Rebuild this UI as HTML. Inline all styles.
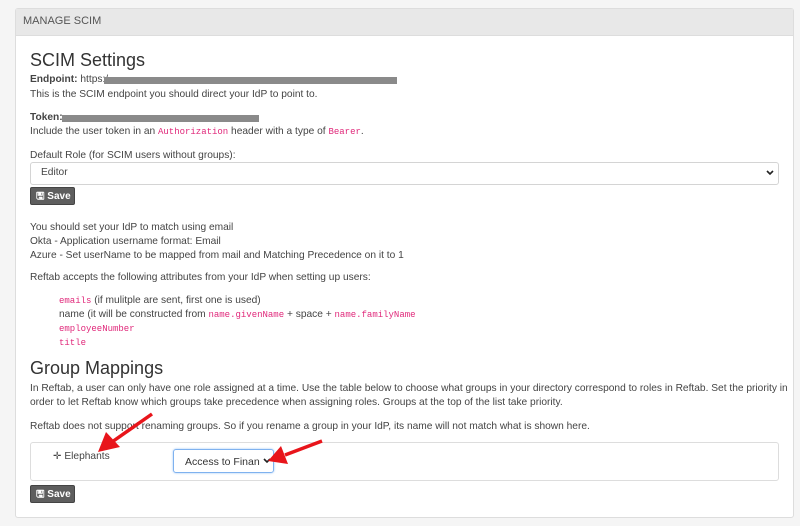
<!DOCTYPE html>
<html><head><style>
body{margin:0;width:800px;height:526px;background:#f5f5f5;font-family:"Liberation Sans",sans-serif;color:#444;position:relative;overflow:hidden}
.a{position:absolute;font-size:10.2px;white-space:nowrap;line-height:12px}
.c{font-family:"Liberation Mono",monospace;color:#e0287a;font-size:9px}
.panel{position:absolute;left:15px;top:8px;width:777px;height:508px;background:#fff;border:1px solid #ddd;border-radius:3px}
.hd{position:absolute;left:0;top:0;right:0;height:26px;background:#e8e8e8;border-bottom:1px solid #ddd}
.btn{position:absolute;left:30px;width:45px;height:18px;background:#5e5e5e;border:1px solid #444;border-radius:2px;color:#fff;font-size:10px;line-height:17px;font-weight:bold;box-sizing:border-box;padding-left:5px}
.red{position:absolute;height:7px;background:#8a8a8a}
h2{position:absolute;margin:0;font-weight:normal;font-size:18px;color:#333;left:30px}
</style></head><body>
<div class="panel"><div class="hd"></div></div>
<div class="a" style="left:23px;top:15px;font-size:11px;color:#555">MANAGE SCIM</div>
<h2 style="top:50px">SCIM Settings</h2>
<div class="a" style="left:30px;top:74px"><b>Endpoint:</b> https:/</div>
<div class="red" style="left:104px;top:77px;width:293px"></div>
<div class="a" style="left:30px;top:89px">This is the SCIM endpoint you should direct your IdP to point to.</div>
<div class="a" style="left:30px;top:112px"><b>Token:</b></div>
<div class="red" style="left:62px;top:115px;width:197px"></div>
<div class="a" style="left:30px;top:126px">Include the user token in an <span class="c">Authorization</span> header with a type of <span class="c">Bearer</span>.</div>
<div class="a" style="left:30px;top:150px">Default Role (for SCIM users without groups):</div>
<div style="position:absolute;left:30px;top:162px;width:747px;height:21px;border:1px solid #d4d4d4;border-radius:3px"></div>
<div class="a" style="left:41px;top:167px">Editor</div>
<svg style="position:absolute;left:766px;top:170px" width="8" height="6"><path d="M1 1 L4 4 L7 1" stroke="#222" stroke-width="1.6" fill="none"/></svg>
<div class="btn" style="top:187px">&#x1F5AB; Save</div>
<div class="a" style="left:30px;top:222px">You should set your IdP to match using email</div>
<div class="a" style="left:30px;top:236px">Okta - Application username format: Email</div>
<div class="a" style="left:30px;top:250px">Azure - Set userName to be mapped from mail and Matching Precedence on it to 1</div>
<div class="a" style="left:30px;top:272px">Reftab accepts the following attributes from your IdP when setting up users:</div>
<div class="a" style="left:59px;top:295px"><span class="c">emails</span> (if mulitple are sent, first one is used)</div>
<div class="a" style="left:59px;top:309px">name (it will be constructed from <span class="c">name.givenName</span> + space + <span class="c">name.familyName</span></div>
<div class="a" style="left:59px;top:323px"><span class="c">employeeNumber</span></div>
<div class="a" style="left:59px;top:337px"><span class="c">title</span></div>
<h2 style="top:358px">Group Mappings</h2>
<div class="a" style="left:30px;top:383px">In Reftab, a user can only have one role assigned at a time. Use the table below to choose what groups in your directory correspond to roles in Reftab. Set the priority in</div>
<div class="a" style="left:30px;top:397px">order to let Reftab know which groups take precedence when assigning roles. Groups at the top of the list take priority.</div>
<div class="a" style="left:30px;top:421px">Reftab does not support renaming groups. So if you rename a group in your IdP, its name will not match what is shown here.</div>
<div style="position:absolute;left:30px;top:442px;width:747px;height:37px;border:1px solid #ddd;border-radius:3px"></div>
<div class="a" style="left:53px;top:451px">&#x271B; Elephants</div>
<div style="position:absolute;left:173px;top:449px;width:99px;height:22px;border:1px solid #7fb2ef;border-radius:3px;box-shadow:0 0 2px #9cc4f5"></div>
<div class="a" style="left:185px;top:456px;font-size:10.5px;color:#333">Access to Finan</div>
<svg style="position:absolute;left:263px;top:458px" width="8" height="6"><path d="M1 1 L4 4 L7 1" stroke="#222" stroke-width="1.6" fill="none"/></svg>
<div class="btn" style="top:485px">&#x1F5AB; Save</div>
<svg style="position:absolute;left:0;top:0" width="800" height="526">
<g stroke="#e8151b" stroke-width="3.5" fill="#e8151b">
<line x1="152" y1="414" x2="112" y2="442"/>
<polygon points="98,452 106,432 120,447" stroke="none"/>
<line x1="322" y1="441" x2="285" y2="455"/>
<polygon points="268,461 281,446 288,464" stroke="none"/>
</g></svg>
</body></html>
